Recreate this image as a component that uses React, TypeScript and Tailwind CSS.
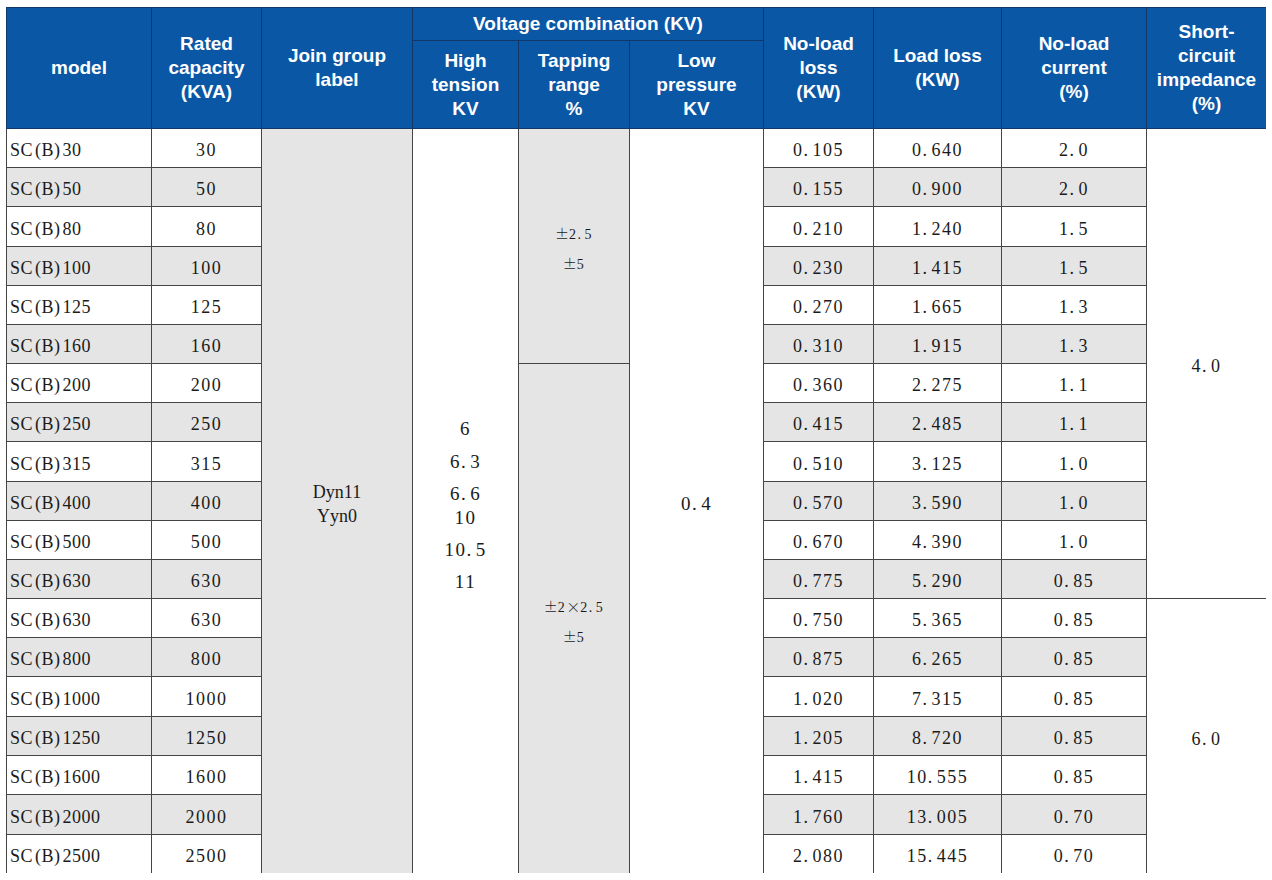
import React from "react";

type Row = [string, string, string, string, string];

const rows: Row[] = [
  ["30", "30", "0.105", "0.640", "2.0"],
  ["50", "50", "0.155", "0.900", "2.0"],
  ["80", "80", "0.210", "1.240", "1.5"],
  ["100", "100", "0.230", "1.415", "1.5"],
  ["125", "125", "0.270", "1.665", "1.3"],
  ["160", "160", "0.310", "1.915", "1.3"],
  ["200", "200", "0.360", "2.275", "1.1"],
  ["250", "250", "0.415", "2.485", "1.1"],
  ["315", "315", "0.510", "3.125", "1.0"],
  ["400", "400", "0.570", "3.590", "1.0"],
  ["500", "500", "0.670", "4.390", "1.0"],
  ["630", "630", "0.775", "5.290", "0.85"],
  ["630", "630", "0.750", "5.365", "0.85"],
  ["800", "800", "0.875", "6.265", "0.85"],
  ["1000", "1000", "1.020", "7.315", "0.85"],
  ["1250", "1250", "1.205", "8.720", "0.85"],
  ["1600", "1600", "1.415", "10.555", "0.85"],
  ["2000", "2000", "1.760", "13.005", "0.70"],
  ["2500", "2500", "2.080", "15.445", "0.70"],
];

const heights = [
  "h-[39px]", "h-[39px]", "h-[40px]", "h-[39px]", "h-[39px]", "h-[39px]",
  "h-[39px]", "h-[39px]", "h-[40px]", "h-[39px]", "h-[39px]", "h-[39px]",
  "h-[39px]", "h-[39px]", "h-[40px]", "h-[39px]", "h-[39px]", "h-[40px]", "h-[39px]",
];

const th =
  "border border-[#12386a] bg-[#0a57a6] text-white font-bold text-[19px] leading-[24px] text-center align-middle p-0";
const td = "border border-[#454545] p-0 align-middle text-[#1b1b1b]";
const num = "text-center text-[18px] tracking-[1.5px] pt-[5px]";

function Num({ v }: { v: string }) {
  const [a, b] = v.split(".");
  return (
    <span>
      {a}.<span className="ml-[3px]">{b}</span>
    </span>
  );
}

function Sym({ c }: { c: string }) {
  return (
    <span className="font-['Noto_Sans_CJK_SC'] text-[14px] tracking-[0px] font-light">
      {c}
    </span>
  );
}

export default function App() {
  return (
    <div className="bg-white w-[1272px] h-[880px] overflow-hidden pt-[7px] pl-[6px]">
      <div className="h-[866px] w-[1260px] overflow-hidden">
        <table
          className="border-collapse table-fixed w-[1260px]"
          style={{ fontFamily: '"Liberation Serif", "Times New Roman", serif' }}
        >
          <colgroup>
            <col className="w-[145px]" />
            <col className="w-[110px]" />
            <col className="w-[151px]" />
            <col className="w-[106px]" />
            <col className="w-[111px]" />
            <col className="w-[134px]" />
            <col className="w-[110px]" />
            <col className="w-[128px]" />
            <col className="w-[145px]" />
            <col className="w-[120px]" />
          </colgroup>
          <thead style={{ fontFamily: '"Liberation Sans", Arial, sans-serif' }}>
            <tr className="h-[33px]">
              <th rowSpan={2} className={th}>model</th>
              <th rowSpan={2} className={th}>
                Rated<br />capacity<br />(KVA)
              </th>
              <th rowSpan={2} className={th}>
                <div className="pb-[1px]">Join group<br />label</div>
              </th>
              <th colSpan={3} className={th}>Voltage combination (KV)</th>
              <th rowSpan={2} className={th}>
                No-load<br />loss<br />(KW)
              </th>
              <th rowSpan={2} className={th}>
                Load loss<br />(KW)
              </th>
              <th rowSpan={2} className={th}>
                No-load<br />current<br />(%)
              </th>
              <th rowSpan={2} className={th}>
                Short-<br />circuit<br />impedance<br />(%)
              </th>
            </tr>
            <tr className="h-[88px]">
              <th className={th}>
                High<br />tension<br />KV
              </th>
              <th className={th}>
                Tapping<br />range<br />%
              </th>
              <th className={th}>
                Low<br />pressure<br />KV
              </th>
            </tr>
          </thead>
          <tbody>
            {rows.map((r, i) => {
              const bg = i % 2 === 1 ? "bg-[#e5e5e5]" : "bg-white";
              return (
                <tr key={i} className={heights[i]}>
                  <td className={`${td} ${bg} text-left pl-[3px] pt-[5px] text-[18px] tracking-[0.5px]`}>
                    SC<span className="ml-[2px]">(B)</span><span className="ml-[2px]">{r[0]}</span>
                  </td>
                  <td className={`${td} ${bg} ${num}`}>{r[1]}</td>
                  {i === 0 && (
                    <td rowSpan={19} className={`${td} bg-[#e5e5e5] text-center text-[18px] leading-[24px]`}>
                      <div className="pt-[6px]">
                        Dyn11
                        <br />
                        Yyn0
                      </div>
                    </td>
                  )}
                  {i === 0 && (
                    <td rowSpan={19} className={`${td} bg-white text-center text-[19px] leading-[24px] tracking-[1.5px]`}>
                      <div className="pt-[8px] flex flex-col items-center">
                        <div>6</div>
                        <div className="mt-[9px]"><Num v="6.3" /></div>
                        <div className="mt-[8px]"><Num v="6.6" /></div>
                        <div>10</div>
                        <div className="mt-[8px]"><Num v="10.5" /></div>
                        <div className="mt-[8px]">11</div>
                      </div>
                    </td>
                  )}
                  {i === 0 && (
                    <td rowSpan={6} className={`${td} bg-[#e5e5e5] text-center text-[14px] leading-[29px] tracking-[1.5px]`}>
                      <div className="pt-[6px]">
                        <div><Sym c="±" />2.<span className="ml-[2px]">5</span></div>
                        <div><Sym c="±" />5</div>
                      </div>
                    </td>
                  )}
                  {i === 6 && (
                    <td rowSpan={13} className={`${td} bg-[#e5e5e5] text-center text-[14px] leading-[28px] tracking-[1.5px]`}>
                      <div className="pt-[6px]">
                        <div><Sym c="±" />2<Sym c="×" />2.<span className="ml-[2px]">5</span></div>
                        <div><Sym c="±" />5</div>
                      </div>
                    </td>
                  )}
                  {i === 0 && (
                    <td rowSpan={19} className={`${td} bg-white ${num} text-[19px]`}>
                      <div className="pt-[2px]"><Num v="0.4" /></div>
                    </td>
                  )}
                  <td className={`${td} ${bg} ${num}`}><Num v={r[2]} /></td>
                  <td className={`${td} ${bg} ${num}`}><Num v={r[3]} /></td>
                  <td className={`${td} ${bg} ${num}`}><Num v={r[4]} /></td>
                  {i === 0 && (
                    <td rowSpan={12} className={`${td} bg-white ${num}`}>
                      <div className="pt-[1px]"><Num v="4.0" /></div>
                    </td>
                  )}
                  {i === 12 && (
                    <td rowSpan={7} className={`${td} bg-white ${num}`}>
                      <div className="pt-[1px]"><Num v="6.0" /></div>
                    </td>
                  )}
                </tr>
              );
            })}
          </tbody>
        </table>
      </div>
    </div>
  );
}
